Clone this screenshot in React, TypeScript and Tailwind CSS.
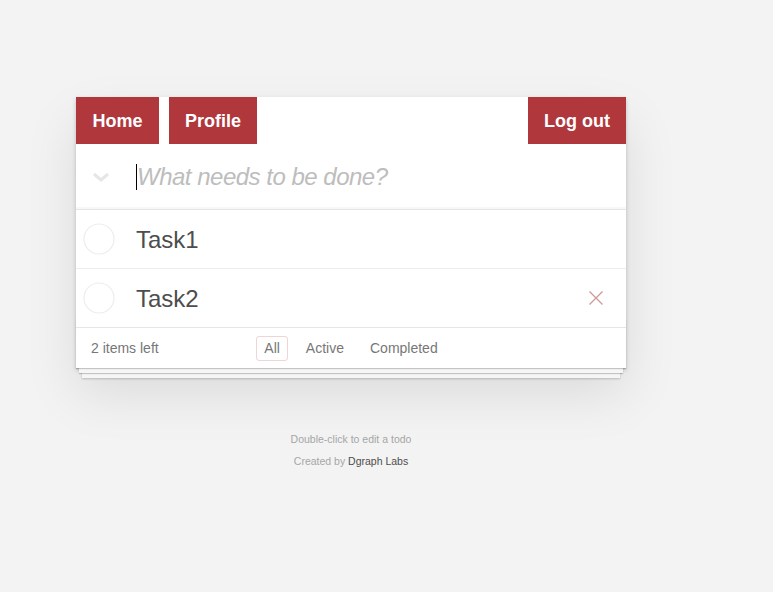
import React from "react";

const font = { fontFamily: '"Liberation Sans", Arial, sans-serif' };

function Circle() {
  return (
    <svg width="32" height="32" viewBox="0 0 32 32" className="shrink-0">
      <circle cx="16" cy="16" r="15" fill="none" stroke="#ededed" strokeWidth="1.2" />
    </svg>
  );
}

export default function App() {
  return (
    <div className="min-h-[592px] bg-[#f3f3f3] pt-[97px]" style={font}>
      <div className="ml-[76px] w-[550px]">
        <div className="relative bg-white shadow-[0_2px_4px_0_rgba(0,0,0,0.2),0_25px_50px_0_rgba(0,0,0,0.1)]">
          <div className="flex h-[47px] justify-between">
            <div className="flex gap-[10px]">
              <div className="flex w-[83px] items-center justify-center bg-[#b0383c] pt-[2px] text-[18px] font-bold text-white">Home</div>
              <div className="flex w-[88px] items-center justify-center bg-[#b0383c] pt-[2px] text-[18px] font-bold text-white">Profile</div>
            </div>
            <div className="flex w-[98px] items-center justify-center bg-[#b0383c] pt-[2px] text-[18px] font-bold text-white">Log out</div>
          </div>
          <div className="flex h-[66px] items-center border-b border-[#e6e6e6] shadow-[inset_0_-2px_1px_rgba(0,0,0,0.03)]">
            <div className="flex w-[60px] pl-[16px]">
              <svg width="18" height="12" viewBox="0 0 18 12">
                <path d="M2 3 L9 9 L16 3" fill="none" stroke="#e6e6e6" strokeWidth="3" strokeLinejoin="round" />
              </svg>
            </div>
            <span className="h-[26px] w-px bg-black" />
            <span className="text-[24px] italic tracking-[-0.5px] text-[#bdbdbd]">What needs to be done?</span>
          </div>
          <div className="relative flex h-[59px] items-center border-b border-[#ededed]">
            <div className="flex w-[60px] pl-[7px]">
              <Circle />
            </div>
            <span className="text-[24px] leading-[29px] text-[#4d4d4d]">Task1</span>
          </div>
          <div className="relative flex h-[58px] items-center">
            <div className="flex w-[60px] pl-[7px]">
              <Circle />
            </div>
            <span className="text-[24px] leading-[29px] text-[#4d4d4d]">Task2</span>
            <svg width="16" height="16" viewBox="0 0 16 16" className="absolute right-[22px] top-[21px]">
              <path d="M1.5 1.5 L14.5 14.5 M14.5 1.5 L1.5 14.5" stroke="#cc9a9a" strokeWidth="1.3" />
            </svg>
          </div>
          <div className="relative flex h-[41px] items-center border-t border-[#e6e6e6] px-[15px] text-[14px] text-[#777]">
            <div className="pointer-events-none absolute inset-x-0 bottom-0 h-[50px] shadow-[0_1px_1px_rgba(0,0,0,0.2),0_8px_0_-3px_#f6f6f6,0_9px_1px_-3px_rgba(0,0,0,0.2),0_16px_0_-6px_#f6f6f6,0_17px_2px_-6px_rgba(0,0,0,0.2)]" />
            <span className="relative">2 items left</span>
            <div className="absolute inset-x-0 top-0 flex h-full items-center justify-center">
              <span className="mx-[5px] rounded-[3px] border border-[rgba(175,47,47,0.2)] px-[7px] py-[3px] leading-[17px]">All</span>
              <span className="mx-[5px] rounded-[3px] border border-transparent px-[7px] py-[3px] leading-[17px]">Active</span>
              <span className="mx-[5px] rounded-[3px] border border-transparent px-[7px] py-[3px] leading-[17px]">Completed</span>
            </div>
          </div>
        </div>
        <div className="mt-[66px] flex flex-col items-center gap-[12px] text-[10.5px] leading-[10px] text-[#a6a6a6]">
          <p>Double-click to edit a todo</p>
          <p>
            Created by <span className="text-[#4d4d4d]">Dgraph Labs</span>
          </p>
        </div>
      </div>
    </div>
  );
}
